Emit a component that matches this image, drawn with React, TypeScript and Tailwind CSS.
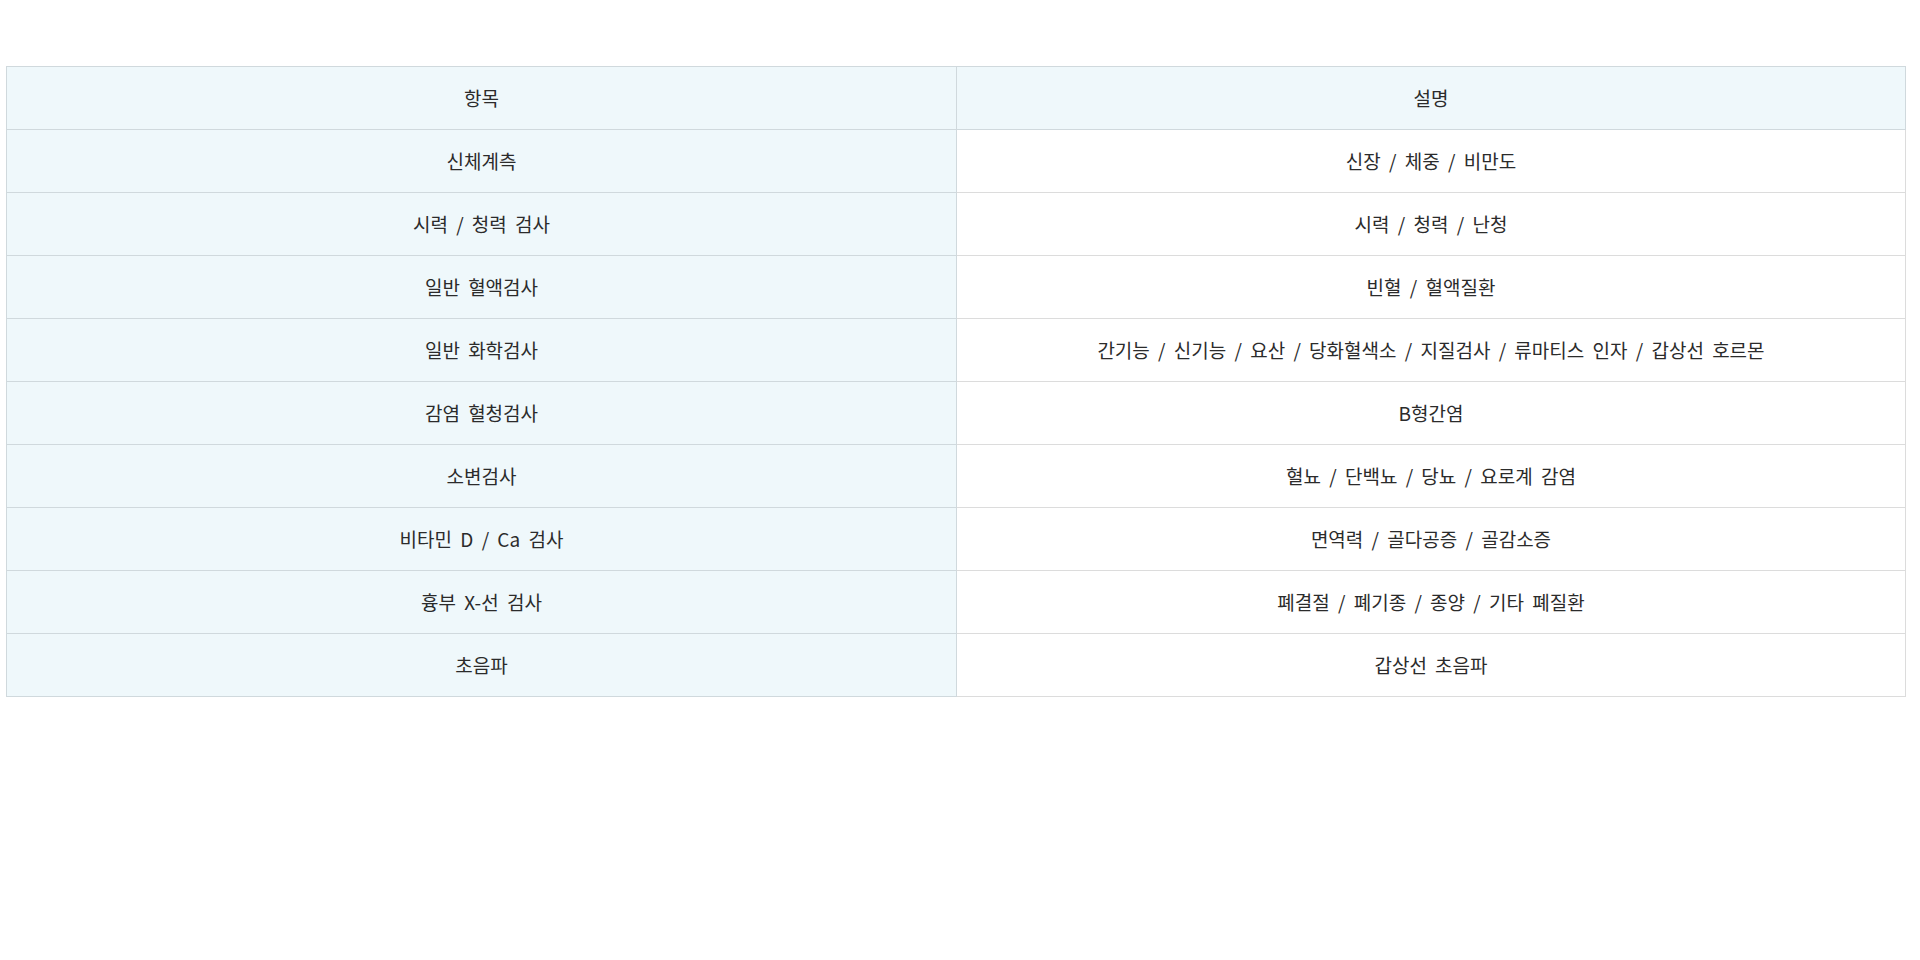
const rows = [
  { item: "신체계측", desc: "신장 / 체중 / 비만도" },
  { item: "시력 / 청력 검사", desc: "시력 / 청력 / 난청" },
  { item: "일반 혈액검사", desc: "빈혈 / 혈액질환" },
  {
    item: "일반 화학검사",
    desc: "간기능 / 신기능 / 요산 / 당화혈색소 / 지질검사 / 류마티스 인자 / 갑상선 호르몬",
  },
  { item: "감염 혈청검사", desc: "B형간염" },
  { item: "소변검사", desc: "혈뇨 / 단백뇨 / 당뇨 / 요로계 감염" },
  { item: "비타민 D / Ca 검사", desc: "면역력 / 골다공증 / 골감소증" },
  { item: "흉부 X-선 검사", desc: "폐결절 / 폐기종 / 종양 / 기타 폐질환" },
  { item: "초음파", desc: "갑상선 초음파" },
];

export default function App() {
  return (
    <div className="min-h-screen bg-white pt-[66px] pl-[6px]">
      <table
        className="w-[1900px] border-collapse table-fixed text-[19px] [word-spacing:4px] text-[#2b2b2b]"
        style={{ fontFamily: '"Noto Sans CJK KR", "Noto Sans", sans-serif' }}
      >
        <colgroup>
          <col className="w-[950px]" />
          <col />
        </colgroup>
        <thead>
          <tr className="h-[63px] bg-[#eff8fb]">
            <th className="border border-[#d0d9dd] font-normal text-center">항목</th>
            <th className="border border-[#d0d9dd] font-normal text-center">설명</th>
          </tr>
        </thead>
        <tbody>
          {rows.map((row) => (
            <tr key={row.item} className="h-[63px]">
              <td className="border border-[#d0d9dd] bg-[#eff8fb] text-center">{row.item}</td>
              <td className="border border-[#dcdcdc] bg-white text-center">{row.desc}</td>
            </tr>
          ))}
        </tbody>
      </table>
    </div>
  );
}
